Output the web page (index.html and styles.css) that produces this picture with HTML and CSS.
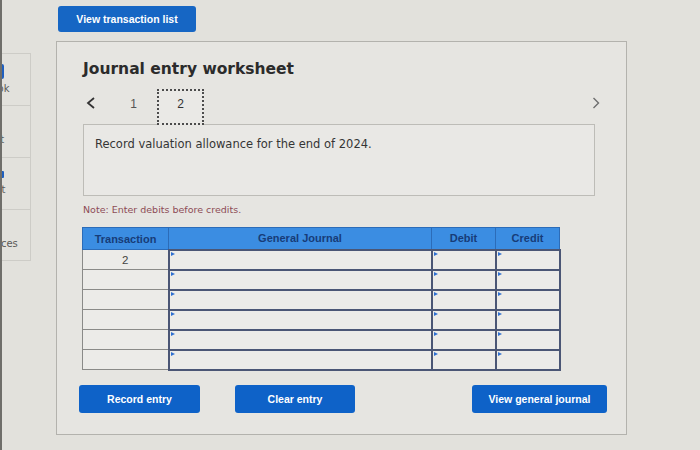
FILE: index.html
```html
<!DOCTYPE html>
<html lang="en">
<head>
<meta charset="utf-8">
<title>Journal entry worksheet</title>
<link rel="stylesheet" href="styles.css">
</head>
<body>
<div class="app">
  <aside class="sidebar">
    <div class="sb-item">
      <div class="sb-inner">
        <svg class="sb-icon" width="20" height="15" viewBox="0 0 20 15"><rect x="1" y="1" width="18" height="13" rx="1" fill="none" stroke="#1f5fbf" stroke-width="2"/><line x1="10" y1="1" x2="10" y2="14" stroke="#1f5fbf" stroke-width="1.5"/></svg>
        <span class="sb-label">eBook</span>
      </div>
    </div>
    <div class="sb-item">
      <div class="sb-inner">
        <svg class="sb-icon" width="20" height="14" viewBox="0 0 20 14"><circle cx="10" cy="6" r="5.5" fill="none" stroke="#1f5fbf" stroke-width="2.4"/><rect x="8" y="11" width="4" height="3" fill="#1f5fbf"/></svg>
        <span class="sb-label">Hint</span>
      </div>
    </div>
    <div class="sb-item">
      <div class="sb-inner">
        <svg class="sb-icon" width="20" height="12" viewBox="0 0 20 12"><rect x="0" y="3" width="20" height="7" rx="1" fill="#1f5fbf"/><rect x="5" y="0" width="10" height="3" fill="#1f5fbf"/></svg>
        <span class="sb-label">Print</span>
      </div>
    </div>
    <div class="sb-item">
      <div class="sb-inner">
        <svg class="sb-icon" width="10" height="14" viewBox="0 0 10 14"><rect x="1" y="1" width="8" height="12" fill="none" stroke="#1f5fbf" stroke-width="2"/></svg>
        <span class="sb-label sb-label-long">References</span>
      </div>
    </div>
  </aside>

  <main class="main">
    <button class="btn btn-top" type="button">View transaction list</button>

    <section class="panel">
      <h1 class="title">Journal entry worksheet</h1>

      <nav class="pager">
        <button class="chev prev" type="button" aria-label="Previous">
          <svg width="10" height="12" viewBox="0 0 10 12"><polyline points="8,1 2,6 8,11" fill="none" stroke="#333" stroke-width="1.8" stroke-linejoin="miter"/></svg>
        </button>
        <span class="tab">1</span>
        <span class="tab active">2</span>
        <button class="chev next" type="button" aria-label="Next">
          <svg width="8" height="12" viewBox="0 0 8 12"><polyline points="1.5,1 6.5,6 1.5,11" fill="none" stroke="#6e6e6e" stroke-width="1.4"/></svg>
        </button>
      </nav>

      <div class="desc">Record valuation allowance for the end of 2024.</div>

      <p class="note">Note: Enter debits before credits.</p>

      <table class="journal">
        <colgroup>
          <col class="c-tr"><col class="c-gj"><col class="c-dr"><col class="c-cr">
        </colgroup>
        <thead>
          <tr><th>Transaction</th><th>General Journal</th><th>Debit</th><th>Credit</th></tr>
        </thead>
        <tbody>
          <tr><td class="tr">2</td><td class="in"><span class="flag"></span></td><td class="in"><span class="flag"></span></td><td class="in"><span class="flag"></span></td></tr>
          <tr><td class="tr"></td><td class="in"><span class="flag"></span></td><td class="in"><span class="flag"></span></td><td class="in"><span class="flag"></span></td></tr>
          <tr><td class="tr"></td><td class="in"><span class="flag"></span></td><td class="in"><span class="flag"></span></td><td class="in"><span class="flag"></span></td></tr>
          <tr><td class="tr"></td><td class="in"><span class="flag"></span></td><td class="in"><span class="flag"></span></td><td class="in"><span class="flag"></span></td></tr>
          <tr><td class="tr"></td><td class="in"><span class="flag"></span></td><td class="in"><span class="flag"></span></td><td class="in"><span class="flag"></span></td></tr>
          <tr><td class="tr"></td><td class="in"><span class="flag"></span></td><td class="in"><span class="flag"></span></td><td class="in"><span class="flag"></span></td></tr>
        </tbody>
      </table>

      <div class="actions">
        <button class="btn btn-record" type="button">Record entry</button>
        <button class="btn btn-clear" type="button">Clear entry</button>
        <button class="btn btn-view" type="button">View general journal</button>
      </div>
    </section>
  </main>
</div>
</body>
</html>
```

FILE: styles.css
```css
* { box-sizing: border-box; }

html, body {
  margin: 0;
  padding: 0;
  width: 700px;
  height: 450px;
  overflow: hidden;
  background: #e2e1dc;
  font-family: "DejaVu Sans", Verdana, sans-serif;
  color: #333;
}

.app {
  display: flex;
  height: 450px;
}

/* ---------- sidebar (clipped at the left edge) ---------- */
.sidebar {
  width: 31px;
  flex: none;
  border-left: 2px solid #6f6e6a;
  padding-top: 53px;
  overflow: hidden;
}

.sb-item {
  height: 52px;
  border-top: 1px solid #cdccc7;
  border-right: 1px solid #cdccc7;
  overflow: hidden;
}
.sb-item:last-child {
  border-bottom: 1px solid #cdccc7;
}

.sb-inner {
  width: 64px;
  margin-left: -40px;
  display: flex;
  flex-direction: column;
  align-items: center;
  padding-top: 10px;
}

.sb-icon { display: block; flex: none; }

.sb-label {
  margin-top: 4px;
  font-size: 10px;
  line-height: 12px;
  color: #5a5a58;
  white-space: nowrap;
}
.sb-label-long {
  margin-right: 8px;
}

/* ---------- main ---------- */
.main {
  flex: 1;
  padding: 6px 0 0 25px;
}

.btn {
  display: flex;
  align-items: center;
  justify-content: center;
  flex: none;
  border: none;
  border-radius: 3px;
  background: #1363c6;
  color: #fff;
  font-family: "Liberation Sans", Arial, sans-serif;
  font-weight: bold;
  font-size: 10.5px;
  padding: 0;
  cursor: pointer;
}

.btn-top {
  width: 138px;
  height: 26px;
  margin-left: 2px;
  background: #1666c4;
}

.panel {
  width: 571px;
  margin-top: 9px;
  border: 1px solid #b3b2ad;
  background: #e6e5e1;
  padding: 18px 31px 21px 26px;
}

.title {
  margin: 0;
  font-size: 15.5px;
  line-height: 18px;
  font-weight: bold;
  color: #2b2b2b;
}

/* pager */
.pager {
  display: flex;
  align-items: flex-start;
  height: 36px;
  margin-top: 11px;
  position: relative;
  z-index: 1;
}

.chev {
  background: none;
  border: none;
  padding: 0;
  display: flex;
  align-items: center;
  cursor: pointer;
  margin-top: 8px;
}
.prev {
  width: 27px;
  padding-left: 3px;
}
.next {
  margin-left: auto;
  margin-right: -5px;
}

.tab {
  width: 47px;
  height: 36px;
  display: flex;
  align-items: center;
  justify-content: center;
  font-family: "Liberation Sans", Arial, sans-serif;
  font-size: 12px;
  color: #555;
  padding-bottom: 6px;
}
.tab.active {
  border: 2px dotted #4c4c4c;
  background: #eae9e6;
  color: #333;
}

/* description */
.desc {
  height: 72px;
  margin-top: -1px;
  border: 1px solid #bdbcb7;
  background: #e9e8e5;
  padding: 12px 11px;
  font-size: 11.5px;
  line-height: 14px;
  color: #353535;
}

.note {
  margin: 8px 0 0;
  font-size: 9.5px;
  line-height: 11px;
  color: #8d4c56;
}

/* table */
.journal {
  margin-top: 12px;
  margin-left: -1px;
  border-collapse: collapse;
  table-layout: fixed;
  width: 477px;
}
.c-tr { width: 86px; }
.c-gj { width: 263px; }
.c-dr { width: 64px; }
.c-cr { width: 64px; }

.journal th {
  height: 22px;
  padding: 0;
  background: #3b8de2;
  border: 1px solid #2c6cb8;
  color: #173c78;
  font-family: "Liberation Sans", Arial, sans-serif;
  font-weight: bold;
  font-size: 11px;
  text-align: center;
}

.journal td {
  height: 20px;
  padding: 0;
  background: #ecebe8;
}

.journal td.tr {
  border: 1px solid #8a8a88;
  text-align: center;
  font-family: "Liberation Sans", Arial, sans-serif;
  font-size: 11.5px;
  color: #444;
}

.journal td.in {
  border: 2px solid #4b5675;
  position: relative;
}

.flag {
  position: absolute;
  top: 1px;
  left: 1px;
  width: 0;
  height: 0;
  border-left: 4px solid #2f6fd0;
  border-top: 2.5px solid transparent;
  border-bottom: 2.5px solid transparent;
}

/* actions */
.actions {
  display: flex;
  margin-top: 14px;
  margin-left: -4px;
}
.actions .btn {
  height: 28px;
  background: #0e62c8;
}
.btn-record { width: 121px; }
.btn-clear { width: 120px; margin-left: 35px; }
.btn-view { width: 135px; margin-left: 117px; }
```
